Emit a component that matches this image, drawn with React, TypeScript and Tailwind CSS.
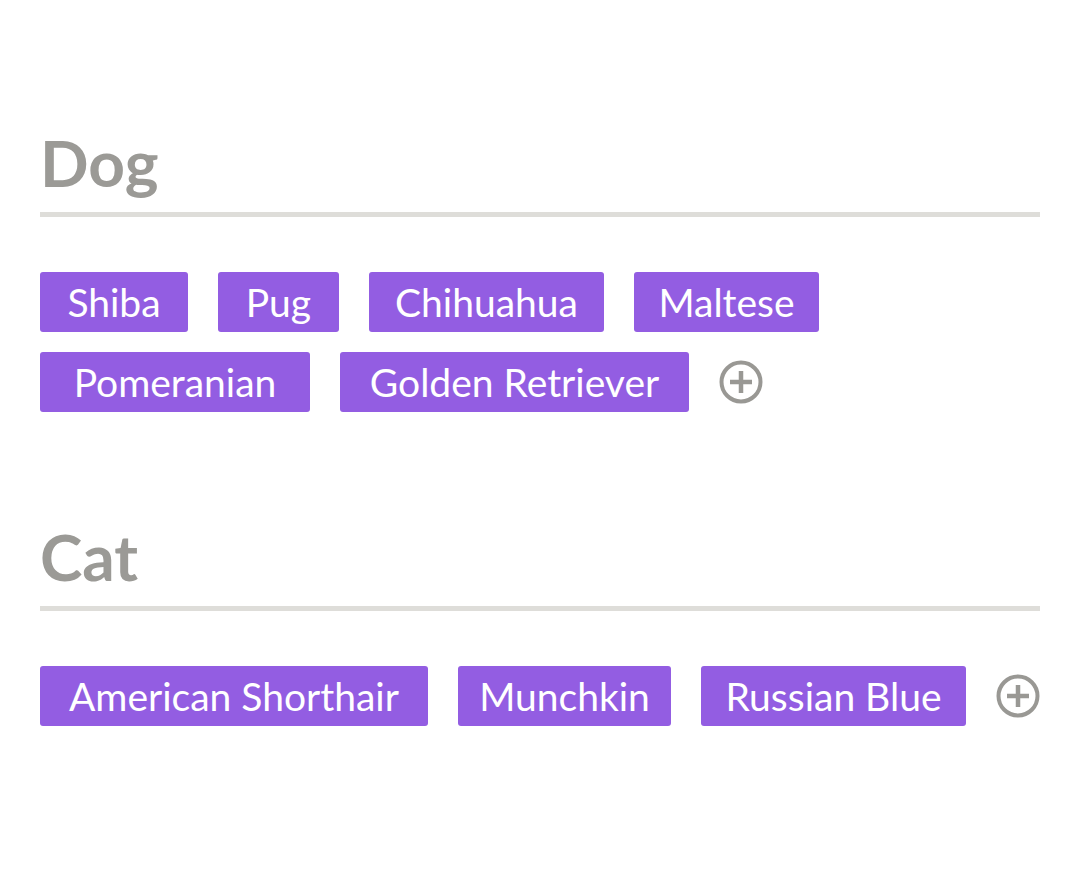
const groups = [
  {
    title: "Dog",
    tags: [
      { label: "Shiba", w: "w-[148px]" },
      { label: "Pug", w: "w-[121px]" },
      { label: "Chihuahua", w: "w-[235px]" },
      { label: "Maltese", w: "w-[185px]" },
      { label: "Pomeranian", w: "w-[270px]" },
      { label: "Golden Retriever", w: "w-[349px]" },
    ],
  },
  {
    title: "Cat",
    tags: [
      { label: "American Shorthair", w: "w-[388px]" },
      { label: "Munchkin", w: "w-[213px]" },
      { label: "Russian Blue", w: "w-[265px]" },
    ],
  },
];

function AddButton() {
  return (
    <button className="size-[44px] flex items-center justify-center">
      <svg viewBox="0 0 44 44" className="size-[44px]" fill="none" stroke="#999894">
        <circle cx="22" cy="22" r="19.5" strokeWidth="4" />
        <path d="M22 11v22M11 22h22" strokeWidth="4.5" />
      </svg>
    </button>
  );
}

export default function App() {
  return (
    <div className="min-h-screen bg-white px-10 pt-[123px]" style={{ fontFamily: "Lato, 'Open Sans', sans-serif" }}>
      {groups.map((g) => (
        <section key={g.title} className="mb-[105px]">
          <h2 className="text-[64px] font-bold leading-[80px] text-[#9b9a96]">{g.title}</h2>
          <div className="mt-[9px] h-[5px] bg-[#deddd9]" />
          <div className="mt-[55px] flex flex-wrap items-center gap-x-[30px] gap-y-[20px]">
            {g.tags.map((t) => (
              <span
                key={t.label}
                className={`${t.w} h-[60px] rounded-[3px] bg-[#935de2] text-white text-[39px] flex items-center justify-center whitespace-nowrap`}
              >
                {t.label}
              </span>
            ))}
            <AddButton />
          </div>
        </section>
      ))}
    </div>
  );
}
